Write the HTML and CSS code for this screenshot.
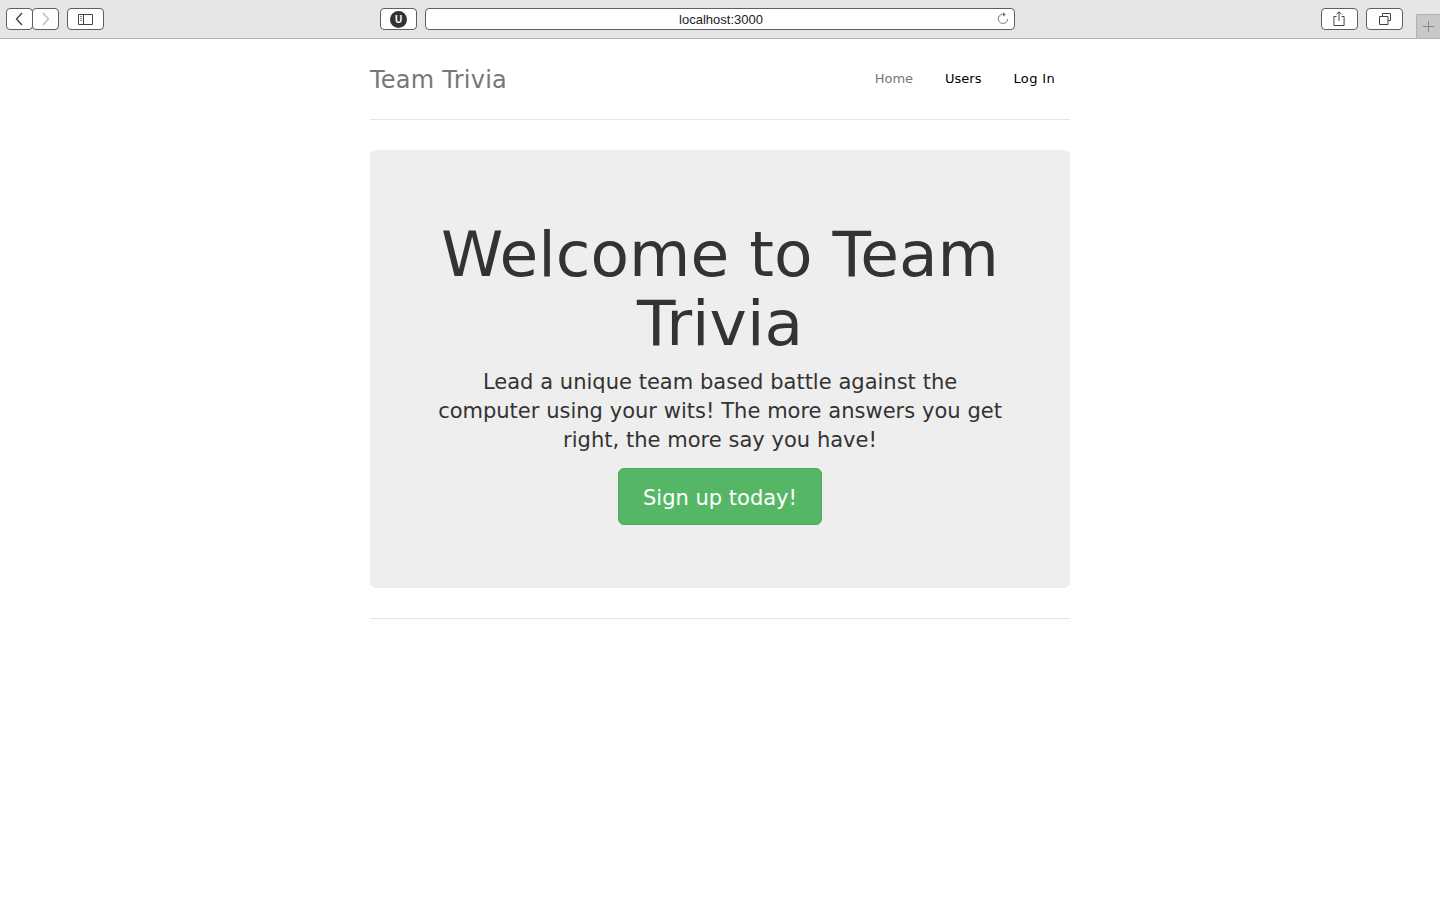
FILE: index.html
```html
<!DOCTYPE html>
<html lang="en">
<head>
<meta charset="utf-8">
<title>Team Trivia</title>
<link rel="stylesheet" href="styles.css">
</head>
<body>
<div class="toolbar">
  <div class="tb-left">
    <div class="nav-pair">
      <div class="tb-btn nav-btn"><svg class="back" width="10" height="14" viewBox="0 0 10 14"><path d="M8 1 2.500 7 8 13" fill="none" stroke="#444" stroke-width="1.400"/></svg></div>
      <div class="tb-btn nav-btn"><svg width="10" height="14" viewBox="0 0 10 14"><path d="M2 1 7.500 7 2 13" fill="none" stroke="#bbb" stroke-width="1.400"/></svg></div>
    </div>
    <div class="tb-btn wide"><svg width="15" height="11" viewBox="0 0 15 11"><path d="M.5.5h14v10H.5zM5.500.5v10" fill="none" stroke="#444"/><path d="M2 2.500h2M2 4.500h2M2 6.500h2" stroke="#888"/></svg></div>
  </div>
  <div class="tb-center">
    <div class="tb-btn wide"><span class="ublock">U</span></div>
    <div class="address"><span>localhost:3000</span>
      <svg class="reload" width="12" height="13" viewBox="0 0 12 13"><path d="M7.400 2.300A4.700 4.700 0 1 0 10.700 7" fill="none" stroke="#777"/><path d="M6 .2 9 2.400 6 4.600z" fill="#777"/></svg>
    </div>
  </div>
  <div class="tb-right">
    <div class="tb-btn wide"><svg class="share" width="12" height="15" viewBox="0 0 12 15"><path d="M3.500 5.500H.9v9h10.200v-9H8.500M6 10V1M3.500 3.200 6 .8l2.500 2.400" fill="none" stroke="#444"/></svg></div>
    <div class="tb-btn wide"><svg width="12" height="12" viewBox="0 0 12 12"><path d="M3.500 3V.5h8v7H9M.5 3.500h8.500v8H.5z" fill="none" stroke="#444"/></svg></div>
  </div>
  <div class="new-tab"><svg width="11" height="11" viewBox="0 0 11 11"><path d="M5.500 0v11M0 5.500h11" stroke="#888"/></svg></div>
</div>
<div class="container">
  <header class="site-header">
    <h3 class="brand">Team Trivia</h3>
    <nav class="site-nav">
      <a class="nav-link muted">Home</a>
      <a class="nav-link">Users</a>
      <a class="nav-link login">Log In</a>
    </nav>
  </header>
  <section class="jumbotron">
    <h1 class="title">Welcome to Team Trivia</h1>
    <p class="lead">Lead a unique team based battle against the computer using your wits! The more answers you get right, the more say you have!</p>
    <a class="cta">Sign up today!</a>
  </section>
  <div class="footer-rule"></div>
</div>
</body>
</html>
```
FILE: styles.css
```css
* { box-sizing: border-box; }
html, body { margin: 0; padding: 0; background: #fff; }
body { font-family: "DejaVu Sans", Verdana, sans-serif; color: #333; }

.toolbar {
  position: relative;
  height: 39px;
  background: #e6e6e6;
  border-bottom: 1px solid #b4b4b4;
  display: grid;
  grid-template-columns: 380px 635px 1fr;
  padding-top: 8px;
}
.tb-left { display: flex; gap: 8px; padding-left: 6px; }
.tb-center { display: flex; gap: 8px; }
.tb-right { display: flex; gap: 8px; justify-content: flex-end; padding-right: 37px; }
.nav-pair { display: flex; }
.tb-btn {
  height: 22px;
  background: #fff;
  border: 1px solid #5f5f5f;
  border-radius: 4px;
  display: flex;
  align-items: center;
  justify-content: center;
}
.nav-btn { width: 27px; }
.nav-btn + .nav-btn { margin-left: -1px; }
.back { margin-left: -2px; }
.share { margin: -2px 1px 0 0; }
.wide { width: 37px; }
.ublock {
  width: 17px;
  height: 17px;
  border-radius: 50%;
  background: #333;
  color: #fff;
  font: bold 10px/17px "Liberation Sans", sans-serif;
  text-align: center;
}
.address {
  position: relative;
  width: 590px;
  height: 22px;
  background: #fff;
  border: 1px solid #5f5f5f;
  border-radius: 4px;
  padding: 1px 0 0 2px;
  font: 13px/20px "Liberation Sans", Arial, sans-serif;
  color: #222;
  text-align: center;
}
.reload { position: absolute; right: 5px; top: 3px; }
.new-tab {
  position: absolute;
  right: 0;
  top: 14px;
  width: 24px;
  height: 24px;
  background: #c8c8c8;
  border: 1px solid #b0b0b0;
  border-right: 0;
  border-bottom: 0;
  display: flex;
  align-items: center;
  justify-content: center;
}

.container { width: 700px; margin: 0 auto; }
.site-header {
  height: 81px;
  display: flex;
  justify-content: space-between;
  align-items: center;
  border-bottom: 1px solid #e5e5e5;
  margin-bottom: 30px;
}
.brand {
  margin: 2px 0 0;
  font-size: 24px;
  font-weight: 400;
  line-height: 26px;
  letter-spacing: .25px;
  color: #777;
}
.site-nav { display: flex; gap: 2px; }
.nav-link {
  padding: 10px 15px;
  font-size: 13px;
  line-height: 20px;
  color: #000;
}
.login { letter-spacing: .35px; }
.muted { color: #777; }

.jumbotron {
  background: #eee;
  border-radius: 6px;
  padding: 70px 60px 63px;
  margin-bottom: 30px;
  text-align: center;
}
.title {
  margin: 0 0 9px;
  font-size: 63px;
  font-weight: 400;
  line-height: 69.3px;
}
.lead {
  margin: 0 0 13px;
  font-size: 21px;
  line-height: 29px;
  word-spacing: .15px;
}
.cta {
  display: block;
  width: 204px;
  height: 57px;
  margin: 0 auto;
  padding-top: 2px;
  background: #55b766;
  border: 1px solid #4cae5c;
  border-radius: 6px;
  color: #fff;
  font-size: 21px;
  line-height: 55px;
}
.footer-rule { border-top: 1px solid #e5e5e5; }
```
